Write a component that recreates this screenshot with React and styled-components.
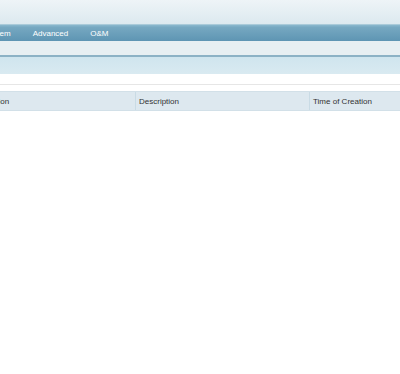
import React from "react";
import styled, { createGlobalStyle } from "styled-components";

const Global = createGlobalStyle`
  html, body {
    margin: 0;
    padding: 0;
    background: #ffffff;
    font-family: "Liberation Sans", Arial, sans-serif;
  }
`;

const Page = styled.div`
  width: 400px;
  height: 374px;
  overflow: hidden;
  background: #ffffff;
`;

const Header = styled.div`
  height: 24px;
  background: linear-gradient(to bottom, #eef4f7, #dce9ef);
`;

const Nav = styled.nav`
  height: 16px;
  display: flex;
  align-items: center;
  gap: 22px;
  margin-left: -16px;
  background: linear-gradient(to bottom, #8ab8ce 0%, #76a8c1 15%, #5e95b3 100%);
  border-top: 1px solid #a9cad9;
`;

const NavItem = styled.span`
  color: #ffffff;
  font-size: 8px;
  white-space: nowrap;
`;

const SubBar = styled.div`
  height: 14px;
  background: #e7eff2;
  border-bottom: 2px solid #8cb2c5;
`;

const TitleBar = styled.div`
  height: 17px;
  background: linear-gradient(to bottom, #cfe5ee, #d9eaf1);
`;

const Spacer = styled.div`
  height: 10px;
  border-bottom: 1px solid #e6e6e6;
  margin-bottom: 6px;
`;

const Table = styled.div`
  display: grid;
  grid-template-columns: 161px 174px 1fr;
  margin-left: -26px;
  height: 18px;
  background: #dde8ef;
  border-top: 1px solid #d2e0e8;
  border-bottom: 1px solid #d2e0e8;
`;

const HeadCell = styled.div`
  display: flex;
  align-items: center;
  padding-left: ${(p) => (p.first ? "0" : "3px")};
  font-size: 8px;
  color: #333333;
  white-space: nowrap;
  overflow: hidden;
  border-left: ${(p) => (p.first ? "none" : "1px solid #c9dbe5")};
`;

export default function App() {
  return (
    <Page>
      <Global />
      <Header />
      <Nav>
        <NavItem>System</NavItem>
        <NavItem>Advanced</NavItem>
        <NavItem>O&amp;M</NavItem>
      </Nav>
      <SubBar />
      <TitleBar />
      <Spacer />
      <Table>
        <HeadCell first>Operation</HeadCell>
        <HeadCell>Description</HeadCell>
        <HeadCell>Time of Creation</HeadCell>
      </Table>
    </Page>
  );
}
